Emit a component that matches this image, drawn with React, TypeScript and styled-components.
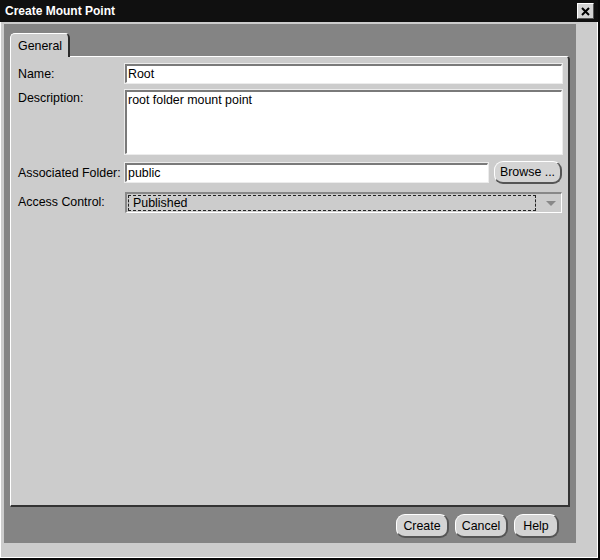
import styled, { createGlobalStyle } from "styled-components";

const Global = createGlobalStyle`
  html, body { margin: 0; padding: 0; background: #cccccc; }
  body { font-family: "Liberation Sans", Arial, sans-serif; font-size: 12.4px; color: #000; }
`;

const Window = styled.div`
  width: 600px;
  height: 560px;
  display: flex;
  flex-direction: column;
  box-sizing: border-box;
  background: #cccccc;
  border-bottom: 2px solid #0a0a0a;
  border-right: 2px solid #0a0a0a;
`;

const TitleBar = styled.div`
  height: 22px;
  background: #101010;
  color: #fff;
  display: flex;
  align-items: center;
  justify-content: space-between;
  padding: 0 4px 0 5px;
  font-weight: bold;
  font-size: 12px;
`;

const CloseBtn = styled.div`
  width: 15px;
  height: 14px;
  background: #d4d4d4;
  border: 1px solid #fff;
  border-right-color: #555;
  border-bottom-color: #555;
  display: flex;
  align-items: center;
  justify-content: center;
`;

const Frame = styled.div`
  flex: 1;
  display: flex;
  flex-direction: column;
  box-sizing: border-box;
  padding: 2px 21px 14px 3px;
  border-left: 1px solid #fff;
  border-bottom: 1px solid #fff;
  border-right: 1px solid #fff;
`;

const Dark = styled.div`
  flex: 1;
  background: #848484;
  display: flex;
  flex-direction: column;
  padding: 9px 6px 5px 6px;
`;

const TabRow = styled.div`
  display: flex;
`;

const Tab = styled.div`
  background: #cccccc;
  border: 1px solid #fff;
  border-bottom: none;
  border-right: 2px solid #2a2a2a;
  border-radius: 5px 5px 0 0;
  padding: 5px 6px 4px 7px;
  margin-bottom: -1px;
  position: relative;
  z-index: 1;
`;

const Panel = styled.div`
  flex: 1;
  background: #cccccc;
  border-left: 1px solid #fff;
  border-top: 1px solid #fff;
  border-right: 2px solid #333;
  border-bottom: 2px solid #333;
  border-radius: 0 4px 0 0;
  padding: 7px 6px 0 7px;
  display: grid;
  grid-template-columns: 107px 1fr;
  grid-auto-rows: min-content;
  align-content: start;
  row-gap: 7px;
`;

const Label = styled.div<{ $top?: boolean }>`
  display: flex;
  align-items: ${(p) => (p.$top ? "flex-start" : "center")};
  padding-top: ${(p) => (p.$top ? "1px" : "0")};
  white-space: nowrap;
`;

const Field = styled.div<{ $h: number }>`
  height: ${(p) => p.$h}px;
  box-sizing: border-box;
  background: #fff;
  border: 1px solid #fff;
  border-top: 2px solid #7a7a7a;
  border-left: 2px solid #7a7a7a;
  outline: 1px solid #ececec;
  padding: ${(p) => (p.$h > 30 ? "1px 1px" : "0 1px")};
  display: flex;
  align-items: ${(p) => (p.$h > 30 ? "flex-start" : "center")};
  flex: 1;
`;

const FolderRow = styled.div`
  display: flex;
  gap: 6px;
  align-items: center;
`;

const Button = styled.div<{ $w: number; $h?: number }>`
  width: ${(p) => p.$w}px;
  height: ${(p) => p.$h ?? 24}px;
  box-sizing: border-box;
  background: #d4d4d4;
  border: 1px solid #fff;
  border-right: 2px solid #555;
  border-bottom: 2px solid #555;
  border-radius: 9px;
  display: flex;
  align-items: center;
  justify-content: center;
`;

const Select = styled.div`
  height: 21px;
  margin-top: 1px;
  box-sizing: border-box;
  background: #cccccc;
  border: 1px solid #fff;
  border-top: 2px solid #888;
  border-left: 2px solid #888;
  padding: 1px;
  display: flex;
`;

const SelectInner = styled.div`
  flex: 1;
  border: 1px dashed #222;
  display: flex;
  align-items: center;
  justify-content: space-between;
  padding: 0 4px;
  margin-right: 24px;
  position: relative;
`;

const Arrow = styled.div`
  position: absolute;
  right: -21px;
  width: 0;
  height: 0;
  border-left: 5px solid transparent;
  border-right: 5px solid transparent;
  border-top: 5px solid #888;
`;

const Footer = styled.div`
  display: flex;
  justify-content: flex-end;
  gap: 6px;
  padding: 7px 11px 0 0;
`;

export default function App() {
  return (
    <Window>
      <Global />
      <TitleBar>
        <span>Create Mount Point</span>
        <CloseBtn>
          <svg width="9" height="9" viewBox="0 0 9 9">
            <path d="M1 1 L8 8 M8 1 L1 8" stroke="#000" strokeWidth="2" />
          </svg>
        </CloseBtn>
      </TitleBar>
      <Frame>
        <Dark>
          <TabRow>
            <Tab>General</Tab>
          </TabRow>
          <Panel>
            <Label>Name:</Label>
            <Field $h={19}>Root</Field>
            <Label $top>Description:</Label>
            <Field $h={64}>root folder mount point</Field>
            <Label>Associated Folder:</Label>
            <FolderRow>
              <Field $h={19}>public</Field>
              <Button $w={68} $h={23}>Browse ...</Button>
            </FolderRow>
            <Label>Access Control:</Label>
            <Select>
              <SelectInner>
                <span>Published</span>
                <Arrow />
              </SelectInner>
            </Select>
          </Panel>
          <Footer>
            <Button $w={53}>Create</Button>
            <Button $w={53}>Cancel</Button>
            <Button $w={45}>Help</Button>
          </Footer>
        </Dark>
      </Frame>
    </Window>
  );
}
